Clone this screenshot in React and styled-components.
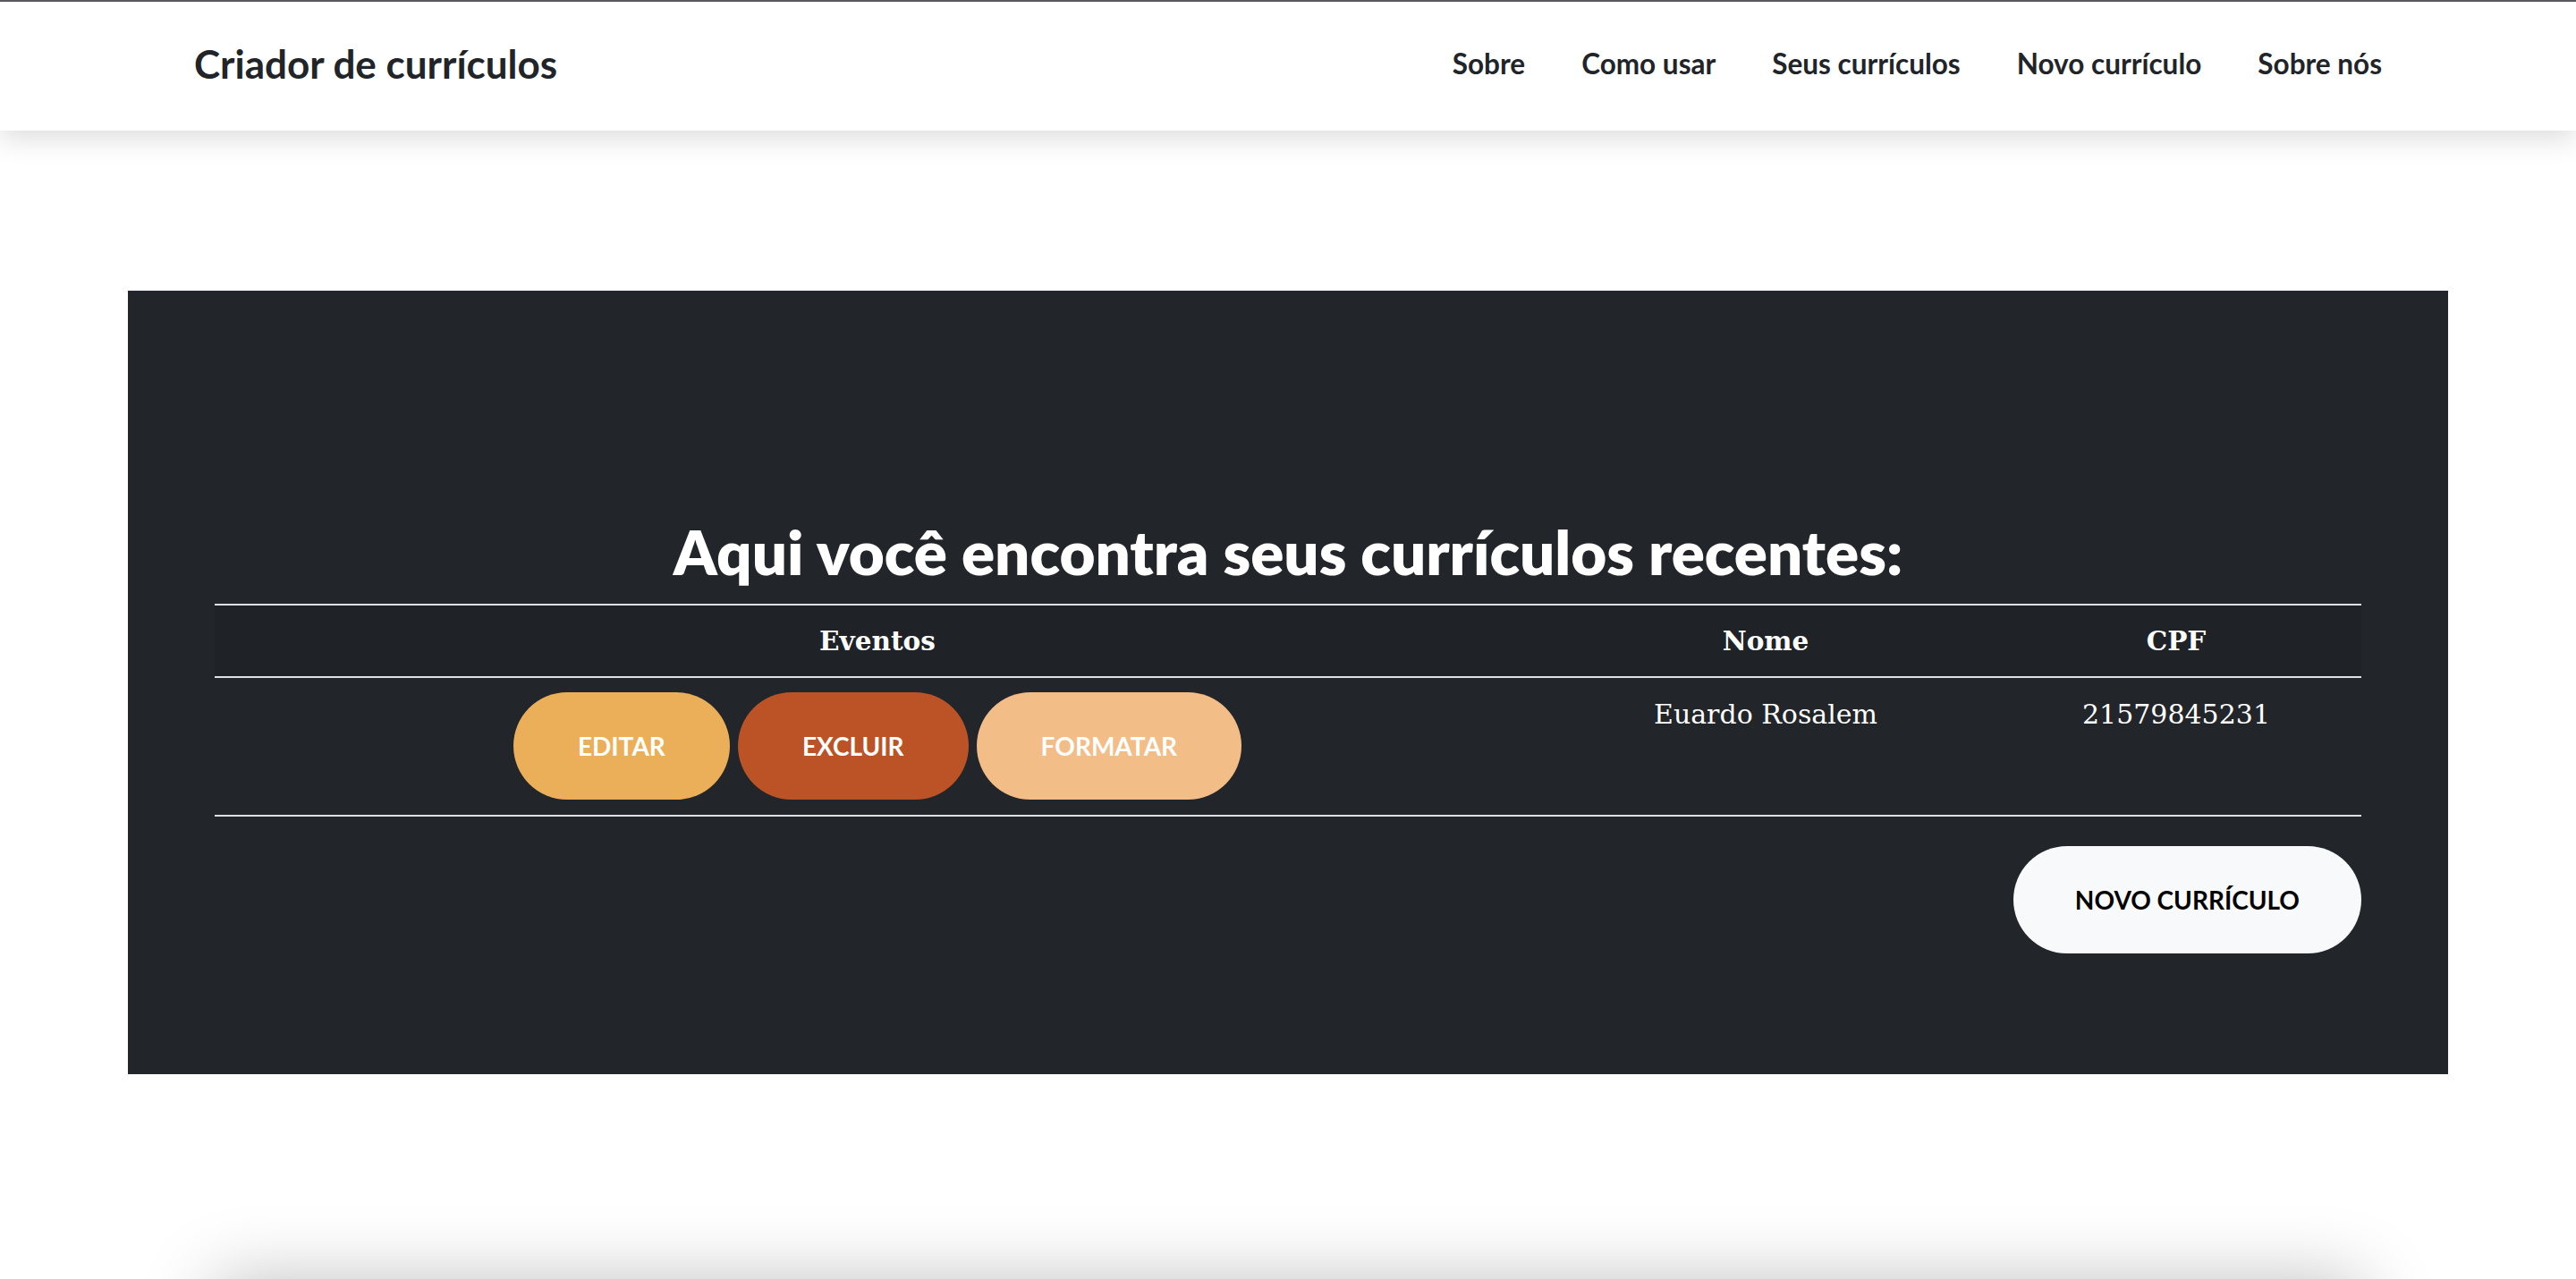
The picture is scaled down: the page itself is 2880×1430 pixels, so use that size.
import React from 'react'
import styled, { createGlobalStyle } from 'styled-components'

const GlobalStyle = createGlobalStyle`
  * { box-sizing: border-box; }
  body {
    margin: 0;
    background: #ffffff;
    border-top: 2px solid #5a5a5e;
    font-family: Lato, "Open Sans", sans-serif;
    color: #212529;
  }
`

const Navbar = styled.nav`
  height: 144px;
  display: flex;
  align-items: center;
  justify-content: space-between;
  padding: 0 217px 6px;
  background: #ffffff;
  box-shadow: 0 10px 28px rgba(0, 0, 0, 0.13);
  position: relative;
  z-index: 2;
`

const Brand = styled.a`
  font-size: 44px;
  font-weight: 700;
  color: #212529;
  text-decoration: none;
`

const NavList = styled.div`
  display: flex;
  gap: 63px;
`

const NavLink = styled.a`
  font-size: 31.5px;
  font-weight: 700;
  color: #212529;
  text-decoration: none;
  cursor: pointer;
`

const Panel = styled.section`
  margin: 179px 143px 0;
  background: #222529;
  padding: 251px 97px 135px;
  display: flex;
  flex-direction: column;
`

const Title = styled.h1`
  margin: 0 0 16px;
  text-align: center;
  color: #ffffff;
  font-size: 69px;
  line-height: 1.2;
  font-weight: 800;
`

const Table = styled.div`
  display: grid;
  grid-template-columns: 1482fr 504fr 414fr;
  border-top: 2px solid #dee2e6;
  border-bottom: 2px solid #dee2e6;
  font-family: "DejaVu Serif", "Liberation Serif", serif;
  color: #ffffff;
`

const HeadCell = styled.div`
  height: 81px;
  display: flex;
  align-items: center;
  justify-content: center;
  background: #1f2226;
  border-bottom: 2px solid #dee2e6;
  font-size: 29.5px;
  font-weight: 700;
`

const Cell = styled.div`
  height: 153px;
  display: flex;
  justify-content: center;
  align-items: flex-start;
  gap: 9px;
  padding-top: ${props => props.$top || 23}px;
  font-size: 30px;
`

const Pill = styled.button`
  height: 120px;
  padding: 0 ${props => props.$pad || 72}px;
  border: none;
  border-radius: 60px;
  background: ${props => props.$bg};
  color: ${props => props.$color || '#ffffff'};
  font-family: Lato, "Open Sans", sans-serif;
  font-size: 28px;
  font-weight: 700;
  text-transform: uppercase;
  cursor: pointer;
`

const Actions = styled.div`
  display: flex;
  justify-content: flex-end;
  margin-top: 33px;
`

const Footer = styled.footer`
  margin: 230px 240px 0;
  height: 200px;
  background: #ffffff;
  box-shadow: 0 0 80px rgba(0, 0, 0, 0.25);
`

const links = ['Sobre', 'Como usar', 'Seus currículos', 'Novo currículo', 'Sobre nós']

const rows = [{ nome: 'Euardo Rosalem', cpf: '21579845231' }]

export default function App() {
  return (
    <>
      <GlobalStyle />
      <Navbar>
        <Brand>Criador de currículos</Brand>
        <NavList>
          {links.map(l => <NavLink key={l}>{l}</NavLink>)}
        </NavList>
      </Navbar>
      <Panel>
        <Title>Aqui você encontra seus currículos recentes:</Title>
        <Table>
          <HeadCell>Eventos</HeadCell>
          <HeadCell>Nome</HeadCell>
          <HeadCell>CPF</HeadCell>
          {rows.map(r => (
            <React.Fragment key={r.cpf}>
              <Cell $top={16}>
                <Pill $bg="#ebaf5a">Editar</Pill>
                <Pill $bg="#bc5327">Excluir</Pill>
                <Pill $bg="#f2bd87">Formatar</Pill>
              </Cell>
              <Cell>{r.nome}</Cell>
              <Cell>{r.cpf}</Cell>
            </React.Fragment>
          ))}
        </Table>
        <Actions>
          <Pill $bg="#f8f9fa" $color="#000000" $pad={69}>Novo currículo</Pill>
        </Actions>
      </Panel>
      <Footer />
    </>
  )
}
